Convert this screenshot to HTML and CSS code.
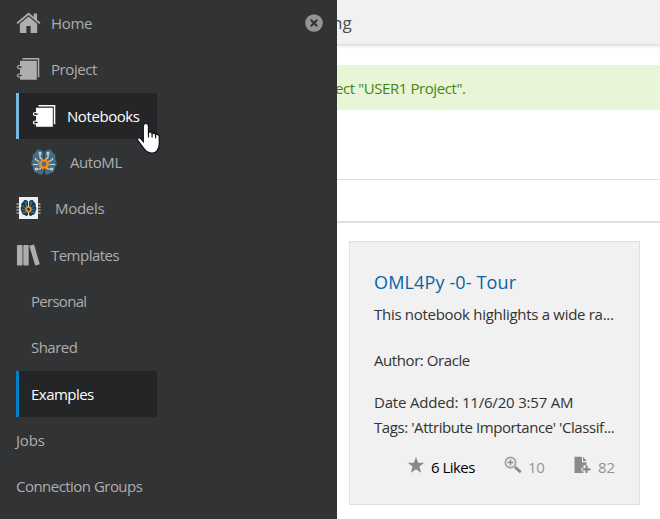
FILE: index.html
```html
<!DOCTYPE html>
<html lang="en">
<head>
<meta charset="utf-8">
<title>Templates</title>
<link rel="stylesheet" href="styles.css">
</head>
<body>
<svg width="0" height="0" class="defs">
  <defs>
    <symbol id="notebook" viewBox="0 0 25 24">
      <path d="M6.500 1h16.800v19.300h-1.500V2.500H6.500z"/>
      <path d="M4 3.700h16.800V22.800H4v-3.300h2.200v-2H4v-6.300h2.200v-2H4z"/>
      <ellipse cx="3.900" cy="10" rx="2.500" ry="1.500" fill="none" stroke="currentColor" stroke-width="1.100"/>
      <ellipse cx="3.900" cy="18.500" rx="2.500" ry="1.500" fill="none" stroke="currentColor" stroke-width="1.100"/>
    </symbol>
    <symbol id="brain" viewBox="0 0 26 26">
      <path d="M12.300 2.500C9.500-.500 5-.300 4.600 3.500 1.800 4.500.500 8 2 10c-2.500 2.500-2 6.500 0 8-.2 4 2 6 5 6 1.500 2.500 5 2 5.300-.5zM13.700 2.500c2.800-3 7.300-2.800 7.700 1 2.800 1 4.100 4.500 2.600 6.500 2.500 2.500 2 6.500 0 8 .2 4-2 6-5 6-1.500 2.500-5 2-5.300-.5z" class="lobe"/>
      <path d="M9 5v3.500l2.200 2M17 5v3.500l-2.200 2M4.500 9v1.500l3.500 2M21.500 9v1.500l-3.500 2M2 15.500h5.500M24 15.500h-5.500M6 20h3l1.500-2M20 20h-3l-1.500-2" class="wire"/>
      <circle cx="9" cy="4.300" r="1" class="wire"/><circle cx="17" cy="4.300" r="1" class="wire"/>
      <circle cx="5.300" cy="20" r="1" class="wire"/><circle cx="20.700" cy="20" r="1" class="wire"/>
      <circle cx="13" cy="15" r="4.800" class="teeth"/>
      <circle cx="13" cy="15" r="3.500" class="gear"/>
    </symbol>
  </defs>
</svg>
<div class="app">
  <nav class="drawer">
    <a class="item"><svg class="icon" viewBox="0 0 26 24"><path d="M13 1 .500 11.800l1.300 1.200L13 3.600 24.200 13l1.300-1.200-3.700-3.200V2h-3.400v3.700z"/><path d="M13 5.300 4 12.800V22.500h6.800V15h4.400v7.500H22v-9.700z"/></svg><span class="fit-3">Home</span></a>
    <a class="item"><svg class="icon book"><use href="#notebook"/></svg><span class="fit-4">Project</span></a>
    <a class="item sub hover"><svg class="icon book"><use href="#notebook"/></svg><span class="fit-4">Notebooks</span></a>
    <a class="item automl"><svg class="icon brain"><use href="#brain"/></svg><span class="fit-4">AutoML</span></a>
    <a class="item models"><svg class="icon chip" viewBox="0 0 24 24"><path d="M0 8h24M0 11h24M0 14h24M0 17h24" stroke="#dededc" stroke-width="1.200"/><path fill="#efefeb" d="M2.500 1h19v22h-19z"/><svg x="3.800" y="3.500" width="16.400" height="17" viewBox="0 0 26 26"><use href="#brain"/></svg></svg><span class="fit-3">Models</span></a>
    <a class="item"><svg class="icon" viewBox="0 0 26 24"><rect x="1" y="1.500" width="5.800" height="21.500" rx="1"/><rect x="7.600" y="1.500" width="5.600" height="21.500" rx="1"/><path d="m13.800 2.500 5-1.300 5.900 20.500-4.700 1.300z"/></svg><span class="fit-5">Templates</span></a>
    <a class="item leaf"><span class="fit-7">Personal</span></a>
    <a class="item leaf"><span class="fit-5">Shared</span></a>
    <a class="item leaf current"><span class="fit-5">Examples</span></a>
    <a class="item"><span class="fit-2">Jobs</span></a>
    <a class="item"><span class="fit-5">Connection Groups</span></a>
    <svg class="close" viewBox="0 0 18 18"><circle cx="9" cy="9" r="8.800" fill="#929495"/><path d="m5.800 5.800 6.400 6.400m0-6.400-6.400 6.400" stroke="#323335" stroke-width="2"/></svg>
  </nav>
  <main class="content">
    <header class="topbar"><span>ng</span></header>
    <div class="notice"><span class="fit-4">ect "USER1 Project".</span></div>
    <div class="toolbar"></div>
    <article class="card">
      <h2>OML4Py -0- Tour</h2>
      <p class="summary fit-3">This notebook highlights a wide ra...</p>
      <p class="author fit-4">Author: Oracle</p>
      <p class="date fit-2">Date Added: 11/6/20 3:57 AM</p>
      <p class="tags fit-4">Tags: 'Attribute Importance' 'Classif...</p>
      <footer class="stats">
        <span class="stat likes"><svg width="18" height="18" viewBox="0 0 18 18"><path d="m9 .800 2.100 5.900h6.200l-4.900 3.900 1.800 6.200L9 13.200l-5.200 3.600 1.800-6.200L.700 6.700h6.200z"/></svg><span class="fit-5">6 Likes</span></span>
        <span class="stat views"><svg width="18" height="18" viewBox="0 0 18 18"><circle cx="6.500" cy="6.500" r="5.200" fill="none" stroke="#a0a3a5" stroke-width="1.700"/><path d="M3.500 6.500h6m-3-3v6" stroke="#888b8d" stroke-width="1.400"/><path d="m11 11 5.700 5.300" stroke="#888b8d" stroke-width="2.800"/></svg><span class="fit-4">10</span></span>
        <span class="stat copies"><svg width="17" height="18" viewBox="0 0 17 18"><path d="M.500.800H8v5.500h4.500v3h-3v2.500H7.500v3.500h2v1.700h-9zM9 .800l3.700 4.300H9z"/><path d="M12.500 9.500v7.500M8.500 13.300h8" stroke="#888b8d" stroke-width="2.200"/></svg><span>82</span></span>
      </footer>
    </article>
  </main>
</div>
<svg class="cursor" width="25" height="34" viewBox="0 0 25 34"><path d="M7.300 19.500V4.200c0-3.700 5.200-3.700 5.200 0v6.300c1.300-1 3.300-.500 3.600 1 1.400-.8 3.200-.2 3.500 1.200 1.700-.7 3.700.2 3.700 2.300V22c0 3-.8 4.700-2.300 6.800-1.700 2.300-4 2.700-6.800 2.200-2.500-.4-4.200-1.600-5.500-3.400L1.800 18.500c-1.200-2 .8-3.300 2.600-2.300z" fill="#fff" stroke="#15151f" stroke-width="1.300"/><path d="M12.500 10v5.500M16.100 11.500v4M19.600 12.700v3.500" stroke="#15151f" stroke-width="1.200"/></svg>
</body>
</html>
```
FILE: styles.css
```css
* { box-sizing: border-box; }
body {
  margin: 0;
  background: #fff;
  font: 15px/20px "Open Sans", "Noto Sans", sans-serif;
  overflow: hidden;
}
.defs { display: block; height: 0; }
.app { display: flex; height: 519px; }
.fit-2 { letter-spacing: -0.190px; }
.fit-3 { letter-spacing: -0.290px; }
.fit-4 { letter-spacing: -0.420px; }
.fit-5 { letter-spacing: -0.530px; }
.fit-7 { letter-spacing: -0.720px; }
.drawer {
  position: relative;
  flex: 0 0 337px;
  display: flex;
  flex-direction: column;
  overflow: hidden;
  background: #323335;
  color: #adaeaf;
}
.item {
  flex: 0 0 46.330px;
  display: flex;
  align-items: center;
  margin-left: 16px;
  width: 141px;
  white-space: nowrap;
}
.icon {
  width: 25px;
  height: 24px;
  margin-right: 10px;
  fill: currentColor;
  flex: none;
}
.hover, .current {
  background: #242527;
  color: #fff;
  border-left: 3px solid #0080cc;
}
.hover { border-left-color: #79b8e2; padding-left: 13px; }
.automl { padding-left: 15px; }
.automl .icon { width: 26px; height: 26px; margin-right: 13px; }
.models .icon { margin-right: 14px; }
.leaf { padding-left: 15px; }
.leaf.current { padding-left: 12px; }
.lobe { fill: var(--lobe, #476b80); }
.wire { fill: none; stroke: var(--wire, #c0dce5); stroke-width: 1.200; }
.gear { fill: var(--lobe, #476b80); stroke: #f58d16; stroke-width: 2.200; }
.teeth { fill: none; stroke: #f58d16; stroke-width: 1.800; stroke-dasharray: 1.900 1.870; }
.chip { --lobe: #143f52; --wire: #5f8796; }
.close { position: absolute; left: 305px; top: 14px; width: 18px; height: 18px; }

.content { flex: 1; min-width: 0; overflow: hidden; }
.topbar {
  height: 45px;
  padding-top: 13px;
  background: #f1f1f1;
  border-bottom: 1px solid #dedede;
  box-shadow: 0 1px 3px #ddd;
  color: #444e57;
  font-size: 17px;
}
.topbar span { margin-left: -5px; }
.notice {
  height: 45px;
  margin-top: 20px;
  padding-top: 13px;
  background: #e9f5d7;
  color: #478511;
}
.notice span { margin-left: -2px; }
.toolbar {
  height: 44px;
  margin-top: 69px;
  border-top: 1px solid #dfdfdf;
  border-bottom: 2px solid #dfdfdf;
}
.card {
  width: 291px;
  height: 264px;
  margin: 18px 0 0 12px;
  padding: 28px 22px 0 24px;
  border: 1px solid #dfe0e1;
  background: #f1f1f1;
  color: #333;
  white-space: nowrap;
}
.card h2, .card p { margin: 0; }
.card h2 {
  font-size: 18px;
  line-height: 24px;
  font-weight: 400;
  letter-spacing: 0.140px;
  color: #0863a6;
}
.card .summary { padding-top: 10px; }
.card .author { padding-top: 26px; }
.card .date { padding-top: 22px; }
.card .tags { padding-top: 5px; }
.stats { display: flex; margin: 19px 0 0 33px; height: 24px; color: #929597; }
.stat { display: flex; gap: 6px; }
.stat > span { padding-top: 1px; }
.stat svg { fill: #888b8d; flex: none; }
.likes { width: 97px; }
.likes > span { color: #000; }
.views { width: 70px; }
.copies { gap: 7px; }
.cursor { position: absolute; left: 136px; top: 122px; }
```
